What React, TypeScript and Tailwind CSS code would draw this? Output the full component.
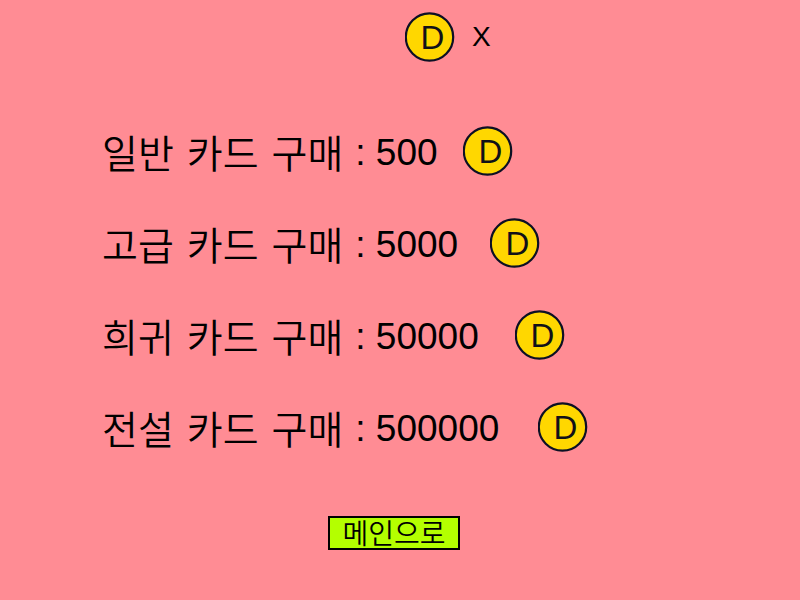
const packs = [
  { grade: "일반", price: 500, gap: "gap-[25px]" },
  { grade: "고급", price: 5000, gap: "gap-8" },
  { grade: "희귀", price: 50000, gap: "gap-9" },
  { grade: "전설", price: 500000, gap: "gap-[39px]" },
];

const latin = "font-['Liberation_Sans',Arial,sans-serif]";
const hangul = "font-['Noto_Sans_CJK_KR',sans-serif]";

function Coin() {
  return (
    <svg viewBox="0 0 50 50" className="size-[50px] shrink-0" role="img" aria-label="D">
      <circle cx="24.5" cy="25" r="23.7" fill="#ffd700" stroke="#0c1024" strokeWidth="2.2" />
      <text x="15.5" y="37" fontSize="33" fill="#111118" className={latin}>
        D
      </text>
    </svg>
  );
}

export default function App() {
  return (
    <main className={`flex min-h-screen flex-col bg-[#ff8c94] pt-3 text-black ${latin}`}>
      <header className="flex items-center gap-[17px] pl-[405px]">
        <Coin />
        <span className="text-[28px] leading-8">X</span>
      </header>

      <ul className="flex flex-col pt-[43px] pl-[102px]">
        {packs.map((pack) => (
          <li key={pack.grade} className="h-[92px]">
            <button type="button" className={`flex h-[92px] items-center ${pack.gap}`}>
              <span className="flex items-center gap-3 pt-[3px] text-[37px] leading-10">
                <span className={`flex gap-[13px] pb-1 text-[39px] leading-10 font-[350] ${hangul}`}>
                  <span>{pack.grade}</span>
                  <span>카드</span>
                  <span>구매</span>
                </span>
                <span>: {pack.price}</span>
              </span>
              <Coin />
            </button>
          </li>
        ))}
      </ul>

      <button
        type="button"
        className={`mt-[43px] ml-[328px] flex h-[34px] w-[132px] items-center justify-center border-2 border-black bg-[#b4ff00] pb-[3px] text-[28px] leading-8 font-[350] ${hangul}`}
      >
        메인으로
      </button>
    </main>
  );
}
